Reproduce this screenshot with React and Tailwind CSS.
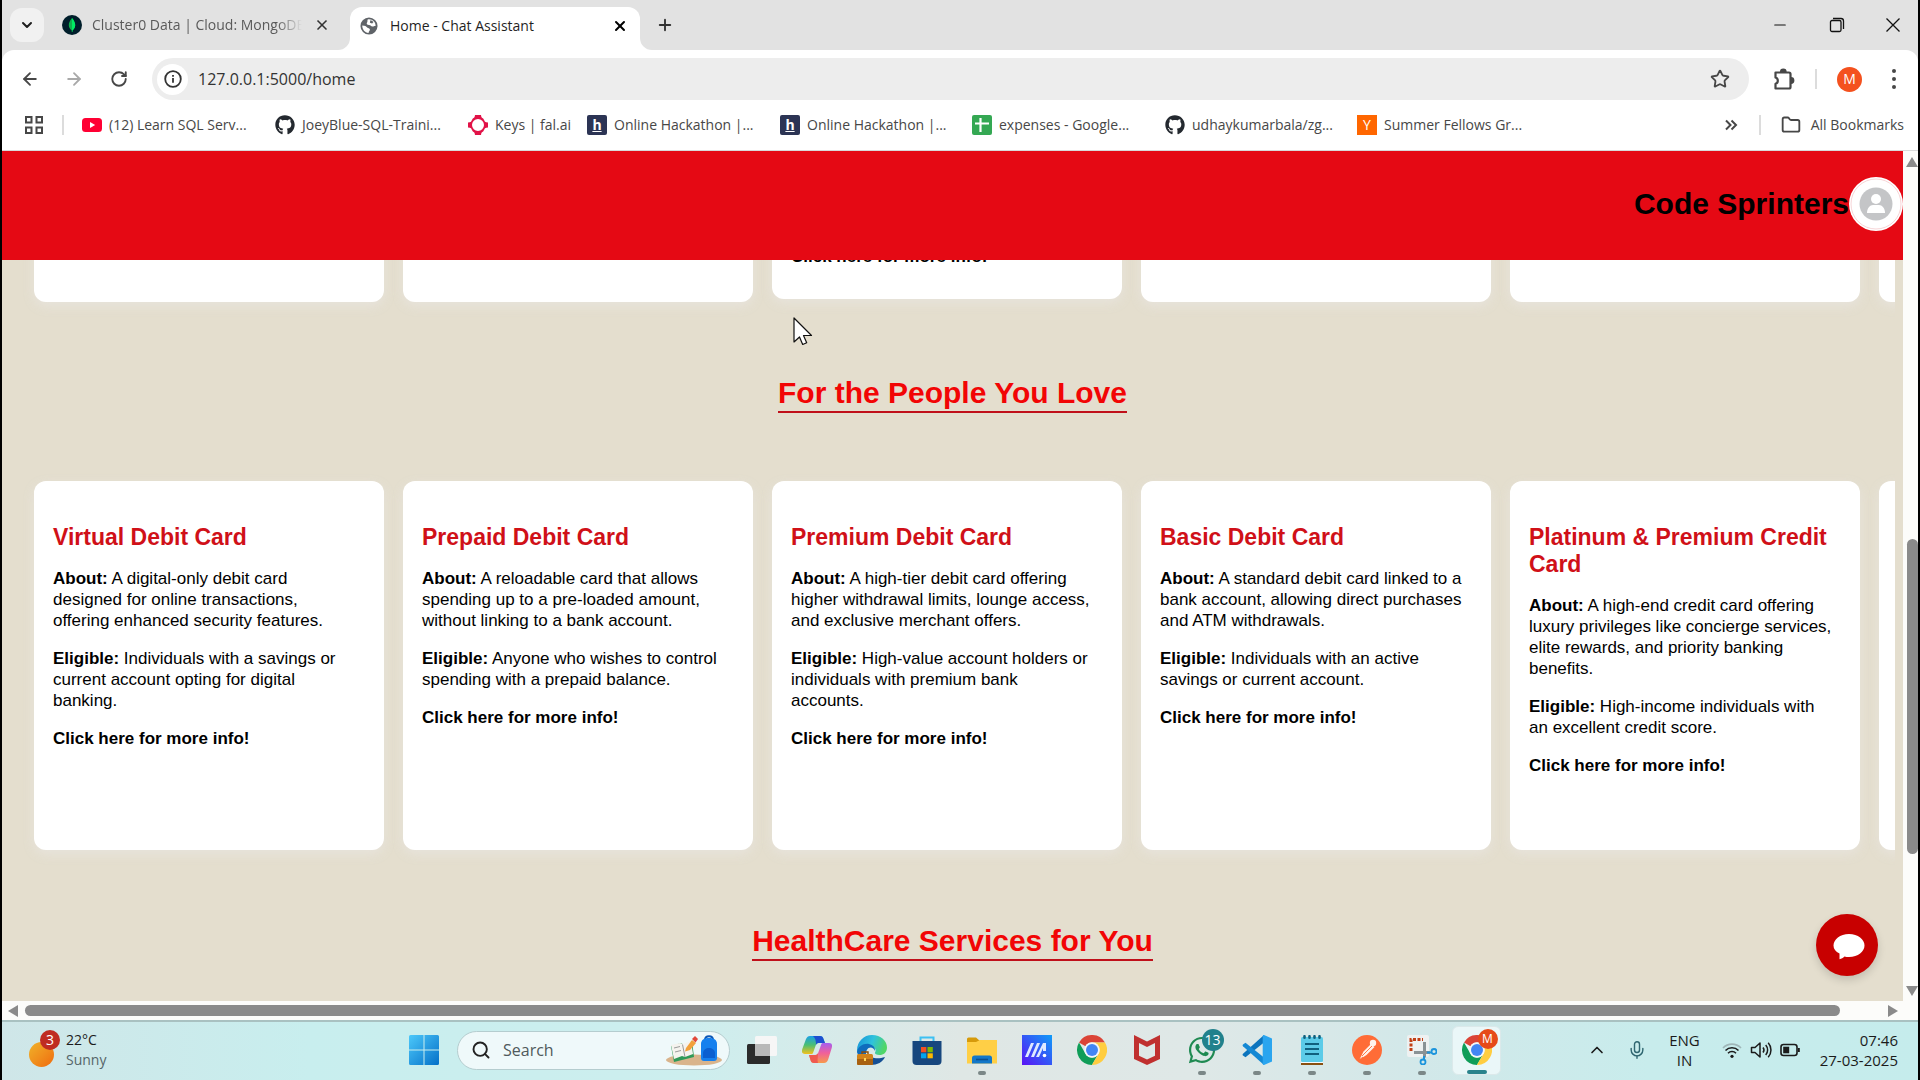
import { ChevronDown, X, Plus, ArrowLeft, ArrowRight, RotateCw, Star, Folder, Search, ChevronUp, Mic, Minus } from "lucide-react";
import { FaGithub, FaWhatsapp } from "react-icons/fa";

const ui = "font-['Open_Sans','Noto_Sans',sans-serif]";

const cards = [
  {
    title: "Virtual Debit Card",
    about: "A digital-only debit card designed for online transactions, offering enhanced security features.",
    eligible: "Individuals with a savings or current account opting for digital banking.",
  },
  {
    title: "Prepaid Debit Card",
    about: "A reloadable card that allows spending up to a pre-loaded amount, without linking to a bank account.",
    eligible: "Anyone who wishes to control spending with a prepaid balance.",
  },
  {
    title: "Premium Debit Card",
    about: "A high-tier debit card offering higher withdrawal limits, lounge access, and exclusive merchant offers.",
    eligible: "High-value account holders or individuals with premium bank accounts.",
  },
  {
    title: "Basic Debit Card",
    about: "A standard debit card linked to a bank account, allowing direct purchases and ATM withdrawals.",
    eligible: "Individuals with an active savings or current account.",
  },
  {
    title: "Platinum & Premium Credit Card",
    about: "A high-end credit card offering luxury privileges like concierge services, elite rewards, and priority banking benefits.",
    eligible: "High-income individuals with an excellent credit score.",
  },
];

function MongoIcon() {
  return (
    <svg viewBox="0 0 20 20" className="size-5 shrink-0">
      <circle cx="10" cy="10" r="10" fill="#001e2b" />
      <path d="M10 3C7.6 6 6.8 8 6.8 10.200c0 2.500 1.500 4 2.800 5l.2 1.800h.5l.2-1.800c1.300-1 2.700-2.500 2.700-5C13.200 8 12.400 6 10 3z" fill="#10b04e" />
      <path d="M10 3v14h.3l.2-1.800c1.300-1 2.700-2.500 2.700-5C13.200 8 12.400 6 10 3z" fill="#00ed64" />
    </svg>
  );
}

function GlobeIcon() {
  return (
    <svg viewBox="0 0 20 20" className="size-[18px] shrink-0">
      <circle cx="10" cy="10" r="9.500" fill="#5f6368" />
      <path d="M2.500 9.500c3 .2 4.500.8 5.500 2.200 1 1.300 2.800.6 3 2 .2 1.500-1.300 2-1.500 4C5.500 17.500 2.500 14 2.500 9.500z" fill="#fff" />
      <path d="M8.500 2.700c-.6 1.600.2 2.500-.8 3.800-.8 1 .3 2.300 2.300 2.400 2.200.1 2 1.800 4 1.700 1.500 0 2-1 3.300-.6C17.600 5.500 13.500 1.800 8.500 2.700z" fill="#fff" />
      <path d="M11.500 3.500c1.500.2 2.800 1 3.500 2l-1.500 1.700-2.500-.9z" fill="#5f6368" />
    </svg>
  );
}

function YoutubeIcon() {
  return (
    <svg viewBox="0 0 20 20" className="size-5 shrink-0">
      <rect y="3" width="20" height="14" rx="3.500" fill="#ff0033" />
      <path d="M8 7v6l5.200-3z" fill="#fff" />
    </svg>
  );
}

function FalIcon() {
  return (
    <svg viewBox="0 0 20 20" className="size-5 shrink-0">
      <path fillRule="evenodd" d="M7 0h6c.2 2.200 1 3 2.200 3.500L17 6.800c.6.500 1.600.7 3 .7v5c-1.400 0-2.400.2-3 .7l-1.800 3.300C14 17 13.200 17.800 13 20H7c-.2-2.200-1-3-2.200-3.500L3 13.200c-.6-.5-1.600-.7-3-.7v-5c1.400 0 2.400-.2 3-.7l1.800-3.300C6 3 6.800 2.200 7 0zm3 4a6 6 0 100 12 6 6 0 000-12z" fill="#e11247" />
    </svg>
  );
}

function HackIcon() {
  return (
    <span className="flex size-5 shrink-0 items-center justify-center rounded-xs bg-[#2c3454] text-sm leading-5 font-bold text-white">
      <u>h</u>
    </span>
  );
}

function SheetsIcon() {
  return (
    <svg viewBox="0 0 20 20" className="size-5 shrink-0">
      <rect width="20" height="20" rx="2" fill="#34a853" />
      <path d="M3 8.500h14M8.500 3v14" stroke="#fff" strokeWidth="2.200" />
    </svg>
  );
}

function YIcon() {
  return <span className="flex size-5 shrink-0 items-center justify-center bg-[#ff6600] text-sm leading-5 text-white">Y</span>;
}

const bookmarks = [
  { icon: <YoutubeIcon />, label: "(12) Learn SQL Serv...", w: "w-[166px]" },
  { icon: <FaGithub className="size-5 shrink-0 text-[#24292f]" />, label: "JoeyBlue-SQL-Traini...", w: "w-[166px]" },
  { icon: <FalIcon />, label: "Keys | fal.ai", w: "w-[92px]" },
  { icon: <HackIcon />, label: "Online Hackathon |...", w: "w-[166px]" },
  { icon: <HackIcon />, label: "Online Hackathon |...", w: "w-[165px]" },
  { icon: <SheetsIcon />, label: "expenses - Google...", w: "w-[166px]" },
  { icon: <FaGithub className="size-5 shrink-0 text-[#24292f]" />, label: "udhaykumarbala/zg...", w: "w-[165px]" },
  { icon: <YIcon />, label: "Summer Fellows Gr...", w: "w-[166px]" },
];

function TabStrip() {
  return (
    <div className="flex h-[50px] shrink-0 items-center bg-[#e2e2e2]">
      <button aria-label="Search tabs" className="ml-2 flex size-[34px] items-center justify-center rounded-xl bg-[#f1f1f1]">
        <ChevronDown className="size-4 text-[#1f1f1f]" strokeWidth={3} />
      </button>
      <div className="ml-[18px] flex w-[272px] items-center">
        <MongoIcon />
        <span className="ml-[10px] w-[210px] overflow-hidden text-sm whitespace-nowrap text-[#5a5a5a] [mask-image:linear-gradient(to_right,black_88%,transparent)]">
          Cluster0 Data | Cloud: MongoDB
        </span>
        <button aria-label="Close Cluster0 tab" className="ml-3">
          <X className="size-4 text-[#333]" strokeWidth={2.500} />
        </button>
      </div>
      <div className="relative ml-4 flex h-[43px] w-[290px] items-center self-end rounded-t-xl bg-white pb-[6px] pl-[10px]">
        <svg viewBox="0 0 12 12" className="absolute bottom-0 -left-3 size-3">
          <path d="M12 0v12H0A12 12 0 0012 0z" fill="#fff" />
        </svg>
        <svg viewBox="0 0 12 12" className="absolute -right-3 bottom-0 size-3">
          <path d="M0 0v12h12A12 12 0 010 0z" fill="#fff" />
        </svg>
        <GlobeIcon />
        <span className="ml-3 text-sm text-[#1f1f1f]">Home - Chat Assistant</span>
        <button aria-label="Close Home tab" className="mr-3 ml-auto">
          <X className="size-4 text-black" strokeWidth={3} />
        </button>
      </div>
      <button aria-label="New tab" className="ml-4">
        <Plus className="size-[18px] text-[#333]" strokeWidth={2.500} />
      </button>
      <div className="mr-[17px] ml-auto flex items-center gap-[40px] text-[#111]">
        <button aria-label="Minimize"><Minus className="size-[18px]" strokeWidth={1.500} /></button>
        <button aria-label="Restore">
          <svg viewBox="0 0 16 16" className="size-4" fill="none" stroke="currentColor" strokeWidth="1.300">
            <rect x="1.500" y="3.500" width="10.500" height="11" rx="1.500" />
            <path d="M4 1.500h8a2.500 2.500 0 012.500 2.500v8" />
          </svg>
        </button>
        <button aria-label="Close window">
          <svg viewBox="0 0 16 16" className="size-4" stroke="currentColor" strokeWidth="1.300"><path d="M1.500 1.500l13 13M14.500 1.500l-13 13" /></svg>
        </button>
      </div>
    </div>
  );
}

function Toolbar() {
  return (
    <div className="bg-[#e2e2e2]">
      <div className="flex h-[58px] items-center rounded-t-xl bg-white text-[#474747]">
        <button aria-label="Back" className="ml-[18px]"><ArrowLeft className="size-5" strokeWidth={2.200} /></button>
        <button aria-label="Forward" className="ml-6 text-[#a9a9a9]"><ArrowRight className="size-5" strokeWidth={2.200} /></button>
        <button aria-label="Reload" className="ml-[26px]"><RotateCw className="size-[18px]" strokeWidth={2.500} /></button>
        <div className="ml-6 flex h-[42px] flex-1 items-center rounded-full bg-[#ededed] px-[5px]">
          <button aria-label="Site information" className="flex size-[31px] items-center justify-center rounded-full bg-white">
            <svg viewBox="0 0 18 18" className="size-[18px]" fill="none" stroke="#333" strokeWidth="1.800">
              <circle cx="9" cy="9" r="7.800" />
              <path d="M9 8v4.800M9 5v1.800" />
            </svg>
          </button>
          <input aria-label="Address" defaultValue="127.0.0.1:5000/home" className="ml-[10px] min-w-0 flex-1 bg-transparent text-base text-[#333] outline-none" />
          <button aria-label="Bookmark this page" className="mr-[14px]"><Star className="size-5" strokeWidth={2.200} /></button>
        </div>
        <button aria-label="Extensions" className="ml-[24px]">
          <svg viewBox="0 0 22 22" className="size-[22px]" fill="none" stroke="currentColor" strokeWidth="2.200" strokeLinejoin="round">
            <path d="M2.500 4.500H16a1.500 1.500 0 011.500 1.500v13a1.500 1.500 0 01-1.500 1.500H2.500v-4.700a3.300 3.300 0 000-6.300z" />
            <path d="M8 4a2.300 2.300 0 014.600 0M18 10.200a2.300 2.300 0 010 4.600" fill="currentColor" />
          </svg>
        </button>
        <span className="ml-5 h-5 w-[2px] bg-[#dcdcdc]" />
        <button aria-label="Profile" className="ml-5 flex size-[25px] items-center justify-center rounded-full bg-[#f4511e] text-sm text-white">M</button>
        <button aria-label="Menu" className="mr-[22px] ml-[30px] flex flex-col gap-1">
          <span className="size-1 rounded-full bg-[#474747]" />
          <span className="size-1 rounded-full bg-[#474747]" />
          <span className="size-1 rounded-full bg-[#474747]" />
        </button>
      </div>
    </div>
  );
}

function BookmarksBar() {
  return (
    <nav aria-label="Bookmarks" className="flex h-[43px] shrink-0 items-center border-b border-[#d9d9d9] bg-white pb-2 text-sm text-[#474747]">
      <button aria-label="Apps" className="ml-[23px]">
        <svg viewBox="0 0 18 18" className="size-[18px]" fill="none" stroke="#474747" strokeWidth="2">
          <path d="M1 1h5.500v5.500H1zM11.500 1H17v5.500h-5.500zM1 11.500h5.500V17H1zM11.500 11.500H17V17h-5.500z" />
        </svg>
      </button>
      <span className="ml-[19px] h-5 w-[2px] bg-[#dcdcdc]" />
      <div className="ml-[18px] flex min-w-0 flex-1 gap-[27px] overflow-hidden">
        {bookmarks.map((b, i) => (
          <a key={i} href="#" className={`${b.w} flex shrink-0 items-center gap-[7px] whitespace-nowrap`}>
            {b.icon}
            <span>{b.label}</span>
          </a>
        ))}
      </div>
      <button aria-label="More bookmarks">
        <svg viewBox="0 0 14 14" className="size-[14px]" fill="none" stroke="#474747" strokeWidth="2"><path d="M2 2.500L6.500 7 2 11.500M7.500 2.500L12 7l-4.500 4.500" /></svg>
      </button>
      <span className="ml-[21px] h-5 w-[2px] bg-[#dcdcdc]" />
      <button className="mr-[14px] ml-5 flex items-center gap-[10px] whitespace-nowrap">
        <Folder className="size-5" strokeWidth={2.200} />
        All Bookmarks
      </button>
    </nav>
  );
}

function SectionTitle({ children }) {
  return (
    <h2 className="flex justify-center">
      <span className="border-b-2 border-[#c0101a] pb-px text-[30px] leading-[34px] font-bold text-[#f20505]">{children}</span>
    </h2>
  );
}

const cardBox = "w-[350px] shrink-0 rounded-xl bg-white shadow-[0_4px_12px_rgba(232,228,222,0.9)]";

function Page() {
  return (
    <main className="flex min-w-0 flex-1 flex-col overflow-hidden bg-[#e4dece] font-['Liberation_Sans',Arial,sans-serif] text-[17px] leading-[21px] text-black">
      <header className="flex h-[109px] shrink-0 items-center justify-end bg-[#e50914] pb-1">
        <span className="text-[30px] leading-9 font-bold">Code Sprinters</span>
        <button aria-label="Account" className="flex size-[54px] items-center justify-center rounded-full bg-white">
          <svg viewBox="0 0 54 54" className="size-full">
            <circle cx="27" cy="27" r="25" fill="none" stroke="#f0b9bc" strokeWidth="0.600" />
            <circle cx="27" cy="27" r="16.500" fill="#c4c5c7" />
            <circle cx="27" cy="22" r="5" fill="#fff" />
            <path d="M18 36c0-5 3-8 6-8h6c3 0 6 3 6 8z" fill="#fff" />
          </svg>
        </button>
      </header>

      <div className="mr-2 flex h-[62px] shrink-0 items-end gap-[19px] overflow-hidden pb-5 pl-8">
        <div className={`${cardBox} h-[369px]`} />
        <div className={`${cardBox} h-[369px]`} />
        <div className={`${cardBox} mb-[3px] flex h-[369px] flex-col justify-end px-[19px] pb-8`}>
          <a href="#" className="font-bold">Click here for more info!</a>
        </div>
        <div className={`${cardBox} h-[369px]`} />
        <div className={`${cardBox} h-[369px]`} />
        <div className={`${cardBox} h-[369px]`} />
      </div>

      <section className="mt-[54px] shrink-0">
        <SectionTitle>For the People You Love</SectionTitle>
        <div className="mt-12 mr-2 flex gap-[19px] overflow-hidden pt-5 pb-5 pl-8">
          {cards.map((c) => (
            <article key={c.title} className={`${cardBox} flex h-[369px] flex-col gap-[17px] py-[43px] pr-[27px] pl-[19px]`}>
              <h3 className="-mr-5 text-[23px] leading-[27px] font-bold text-[#d01018]">{c.title}</h3>
              <p><b>About:</b> {c.about}</p>
              <p><b>Eligible:</b> {c.eligible}</p>
              <a href="#" className="font-bold">Click here for more info!</a>
            </article>
          ))}
          <article className={cardBox} />
        </div>
      </section>

      <section className="mt-[54px] shrink-0">
        <SectionTitle>HealthCare Services for You</SectionTitle>
      </section>
    </main>
  );
}

function VerticalScrollbar() {
  return (
    <div className="flex w-[15px] shrink-0 flex-col items-end bg-[#fcfcfa]">
      <svg viewBox="0 0 12 10" className="mt-[6px] h-[10px] w-3"><path d="M0 10L6 0l6 10z" fill="#8a8a8a" /></svg>
      <div className="flex w-full flex-1 flex-col items-end">
        <div className="flex-[372]" />
        <div className="w-[11px] flex-[315] rounded-full bg-[#8a8a8a]" />
        <div className="flex-[132]" />
      </div>
      <svg viewBox="0 0 12 10" className="mb-[5px] h-[10px] w-3"><path d="M0 0h12L6 10z" fill="#8a8a8a" /></svg>
    </div>
  );
}

function HorizontalScrollbar() {
  return (
    <div className="flex h-[19px] shrink-0 items-center bg-[#fcfcfa] pl-[6px]">
      <svg viewBox="0 0 10 12" className="h-3 w-[10px]"><path d="M10 0v12L0 6z" fill="#8a8a8a" /></svg>
      <div className="ml-[7px] h-[11px] flex-[1815] rounded-full bg-[#8a8a8a]" />
      <div className="flex-[48]" />
      <svg viewBox="0 0 10 12" className="mr-5 h-3 w-[10px]"><path d="M0 0v12l10-6z" fill="#8a8a8a" /></svg>
    </div>
  );
}

function ChromeIcon() {
  return (
    <svg viewBox="0 0 30 30" className="size-full">
      <path d="M2 7.500A15 15 0 0128 7.500H15a7.500 7.500 0 00-6.500 3.700z" fill="#db4437" />
      <path d="M2 7.500A15 15 0 0014.900 30l6.600-11.200A7.500 7.500 0 018.500 18.800z" fill="#0f9d58" />
      <path d="M28 7.500A15 15 0 0114.900 30l6.600-11.200A7.500 7.500 0 0015 7.500z" fill="#ffcd40" />
      <circle cx="15" cy="15" r="7.700" fill="#f4f7f7" />
      <circle cx="15" cy="15" r="6" fill="#4285f4" />
    </svg>
  );
}

const apps = [
  {
    name: "Task view",
    art: (
      <svg viewBox="0 0 30 30" className="size-full">
        <rect y="9" width="23" height="20" rx="1.500" fill="#2b2b2b" />
        <rect x="8" y="1" width="22" height="20" rx="1.500" fill="#f6f6f6" />
        <path d="M8 9h15v12H9.500A1.500 1.500 0 018 19.500z" fill="#b9b9b9" />
      </svg>
    ),
  },
  {
    name: "Copilot",
    art: (
      <svg viewBox="0 0 30 30" className="size-full">
        <defs>
          <linearGradient id="cpA" x1="0" y1="0" x2="0" y2="1"><stop offset="0" stopColor="#1aa0e8" /><stop offset=".5" stopColor="#4bbf72" /><stop offset="1" stopColor="#f3c11d" /></linearGradient>
          <linearGradient id="cpB" x1="0" y1="0" x2="0" y2="1"><stop offset="0" stopColor="#a55df0" /><stop offset=".5" stopColor="#f0609a" /><stop offset="1" stopColor="#f79a4b" /></linearGradient>
        </defs>
        <path d="M8 1h10c2 0 3 1 3.500 3L23 8h-6c-2 0-3 1-3.500 3L11 18c-.5 1-1 1-2 1H3c-3 0-3.500-2-2.700-5L4 4c1-2 2-3 4-3z" fill="url(#cpA)" />
        <path d="M14 1h4c2 0 3 1 3.500 3L23 8h-6c-1.500 0-2.500.5-3 2 0-4-.5-7-3-9z" fill="#1d4fd0" />
        <path d="M22 28H12c-2 0-3-1-3.500-3L7 20h6c2 0 3-1 3.500-3L19 10c.5-1.500 1-2 2-2h6c3 0 3.500 2 2.700 5L26 25c-1 2-2 3-4 3z" fill="url(#cpB)" />
        <path d="M16 28h-4c-2 0-3-1-3.500-3L7 20h6c1.500 0 2.500-.5 3-2 0 4-1 7 0 10z" fill="#ef5a50" />
      </svg>
    ),
  },
  {
    name: "Edge",
    art: (
      <svg viewBox="0 0 30 30" className="size-full">
        <defs><linearGradient id="edA" x1="0" y1="0" x2="1" y2=".3"><stop offset="0" stopColor="#1591d8" /><stop offset=".55" stopColor="#2fc2dd" /><stop offset="1" stopColor="#50d667" /></linearGradient></defs>
        <path d="M0 15A15 15 0 0115 0c9 0 15 6 15 12.500 0 5-3.500 7.500-7.500 7.500-3 0-5-1-4.500-2.500 1.500-2 .5-5.500-3.500-5.500C8 12 5 17 5 22 2 20 0 18 0 15z" fill="url(#edA)" />
        <path d="M0 17C1 11 7 8 12 9c4 .8 6.500 3.500 6 7-1-3-4-4.500-6.500-3-3 2-2.500 7-2.500 7H1z" fill="#0f6cbd" />
        <path d="M14 22c5 2 9 1.500 14 0-2 5-8 8-14 8z" fill="#144f94" />
        <rect y="19" width="16" height="11" rx="1.500" fill="#d0831a" />
        <path d="M0 24h16v4.500a1.500 1.500 0 01-1.500 1.500h-13A1.500 1.500 0 010 28.500z" fill="#a86110" />
        <path d="M5 19v-2h6v2" stroke="#8a4b08" strokeWidth="1.400" fill="none" />
        <rect x="7" y="23" width="2" height="3" fill="#ffd65a" />
      </svg>
    ),
  },
  {
    name: "Microsoft Store",
    art: (
      <svg viewBox="0 0 30 30" className="size-full">
        <path d="M8.500 7V2.500h13V7" fill="none" stroke="#3cc0f2" strokeWidth="2" />
        <path d="M.5 6h29v20a4 4 0 01-4 4h-21a4 4 0 01-4-4z" fill="#17477e" />
        <path d="M9 12h5.300v5.300H9z" fill="#f25022" /><path d="M15.500 12h5.300v5.300h-5.300z" fill="#7fba00" />
        <path d="M9 18.300h5.300v5H9z" fill="#00a4ef" /><path d="M15.500 18.300h5.300v5h-5.300z" fill="#ffb900" />
      </svg>
    ),
  },
  {
    name: "File Explorer",
    dot: true,
    art: (
      <svg viewBox="0 0 30 30" className="size-full">
        <path d="M0 4a1.500 1.500 0 011.500-1.500H9l4 3.500-4 4H0z" fill="#d69a0b" />
        <path d="M0 7h9l4-2h17v23.500H0z" fill="#ffcf46" />
        <path d="M5 28.500V23a2.500 2.500 0 012.500-2.500h15A2.500 2.500 0 0125 23v5.500z" fill="#1377c8" />
        <path d="M9 24.500h12" stroke="#0b4f8f" strokeWidth="1.600" />
      </svg>
    ),
  },
  {
    name: "MyASUS",
    art: (
      <svg viewBox="0 0 30 30" className="size-full">
        <defs><linearGradient id="asA" x1="0" y1="1" x2="1" y2="0"><stop offset="0" stopColor="#5a12f5" /><stop offset="1" stopColor="#0f9cf8" /></linearGradient></defs>
        <rect width="30" height="30" fill="url(#asA)" />
        <path d="M3 22L9 8h3L6 22zM9 22l6-14h3l-6 14zM14 22L21 8h3v8h-3v-3l-4 9z" fill="#dfe9ff" />
        <circle cx="22.500" cy="20.500" r="1.800" fill="#fff" />
      </svg>
    ),
  },
  { name: "Chrome", art: <ChromeIcon /> },
  {
    name: "McAfee",
    art: (
      <svg viewBox="0 0 30 30" className="size-full">
        <path fillRule="evenodd" d="M2 0l13 6.500L28 0v24l-13 6-13-6zM7 8v12.700l8 3.800 8-3.800V8l-8 4z" fill="#c0302f" />
      </svg>
    ),
  },
  {
    name: "WhatsApp",
    dot: true,
    art: (
      <>
        <FaWhatsapp className="size-full text-[#1f8a52]" />
        <span className="absolute -top-[6px] left-[15px] flex size-[22px] items-center justify-center rounded-full bg-[#21818c] text-sm text-white">13</span>
      </>
    ),
  },
  {
    name: "Visual Studio Code",
    dot: true,
    art: (
      <svg viewBox="0 0 30 30" className="size-full">
        <path d="M22 7.500L3.500 22.300 1 20.500c-.6-.5-.6-1.200 0-1.800L22 0z" fill="#0c74bd" />
        <path d="M22 22.500L3.500 7.700 1 9.500c-.6.500-.6 1.200 0 1.800L22 30z" fill="#1488d4" />
        <path d="M22 0l8 3.500v23L22 30c-.8 0-1.300-.5-1.300-1.200V1.200C20.700.5 21.200 0 22 0z" fill="#2aa5ef" />
      </svg>
    ),
  },
  {
    name: "Notepad",
    dot: true,
    art: (
      <svg viewBox="0 0 30 30" className="size-full">
        <rect x="4" y="27" width="22" height="3" fill="#8a5010" />
        <rect x="4" y="2" width="22" height="25" rx="1.500" fill="#5ccbe8" />
        <path d="M4 27h22v1H4z" fill="#f2fbff" />
        <path d="M8 9h14M8 14h14M8 19h14" stroke="#10607e" strokeWidth="1.800" />
        <path d="M7.500 1.200v1.600M12.500 1.200v1.600M17.500 1.200v1.600M22.500 1.200v1.600" stroke="#10607e" strokeWidth="2.600" strokeLinecap="round" />
      </svg>
    ),
  },
  {
    name: "Postman",
    dot: true,
    art: (
      <svg viewBox="0 0 30 30" className="size-full">
        <circle cx="15" cy="15" r="15" fill="#ff6c37" />
        <circle cx="21" cy="8" r="3.200" fill="#fff3ec" />
        <path d="M19 9l3.500 3-8 8-7 4.500 4-8z" fill="#fff3ec" />
        <path d="M10 21L20 11M7 25l4-3" stroke="#ff6c37" strokeWidth="0.900" />
      </svg>
    ),
  },
  {
    name: "Snipping Tool",
    dot: true,
    art: (
      <svg viewBox="0 0 30 30" className="size-full">
        <rect width="22" height="22" rx="2" fill="#eef1f1" />
        <path d="M4 16V4.500h12" fill="none" stroke="#c23f14" strokeWidth="3" strokeDasharray="3 1.500" />
        <path d="M17.500 7v15.500M7 17.500h16" stroke="#8a9295" strokeWidth="3" />
        <circle cx="27" cy="16.500" r="2.500" fill="none" stroke="#1c94dc" strokeWidth="1.800" />
        <circle cx="16" cy="27" r="2.500" fill="none" stroke="#1c94dc" strokeWidth="1.800" />
        <path d="M20 17.500h4.500M17 21v4" stroke="#1c94dc" strokeWidth="2" />
      </svg>
    ),
  },
  {
    name: "Chrome, Home - Chat Assistant",
    active: true,
    art: (
      <>
        <ChromeIcon />
        <span className="absolute -top-[6px] left-4 flex size-5 items-center justify-center rounded-full bg-[#e64a19] text-xs text-white">M</span>
      </>
    ),
  },
];

function Taskbar() {
  return (
    <footer className="flex h-[60px] shrink-0 items-center border-t-2 border-[#a9c1c1] bg-[linear-gradient(90deg,#cfe6e8,#c8eeee_16%,#cdeeee_36%,#dfe7e5_50%,#dfe8e7_62%,#d2e8e9_74%,#c8ecec_86%,#c5ecec)] pb-[2px] text-[#1b1b1b]">
      <div className="flex flex-1 items-center">
        <button aria-label="Weather" className="ml-[27px] flex items-center gap-2 text-left">
          <span className="relative mt-1 size-[29px]">
            <span className="absolute bottom-0 left-0 size-[25px] rounded-full bg-linear-to-br from-[#efb229] to-[#ee6a0e]" />
            <span className="absolute -top-2 left-[11px] flex size-5 items-center justify-center rounded-full bg-[#bf2c22] text-sm text-white">3</span>
          </span>
          <span className="flex flex-col text-sm leading-5">
            <span>22°C</span>
            <span className="text-[#556568]">Sunny</span>
          </span>
        </button>
      </div>
      <div className="flex items-center pl-[10px]">
        <button aria-label="Start">
          <svg viewBox="0 0 30 30" className="size-[30px]">
            <defs><linearGradient id="win" x1="0" y1="0" x2="1" y2="1"><stop offset="0" stopColor="#4cc8fa" /><stop offset="1" stopColor="#0470c8" /></linearGradient></defs>
            <path d="M0 1.500Q0 0 1.500 0h13v14.500H0zM15.500 0h13Q30 0 30 1.500v13H15.500zM0 15.500h14.500V30h-13Q0 30 0 28.500zM15.500 15.500H30v13q0 1.500-1.500 1.500h-13z" fill="url(#win)" />
          </svg>
        </button>
        <label className="ml-[18px] flex h-[39px] w-[273px] items-center rounded-full border border-[#b5cdcf] bg-[#eff9fa] pr-[6px] pl-[13px]">
          <Search className="size-5 shrink-0 text-[#222]" strokeWidth={2.300} />
          <input aria-label="Search" placeholder="Search" className="ml-3 w-full min-w-0 bg-transparent text-base outline-none placeholder:text-[#505a5c]" />
          <svg viewBox="0 0 58 32" className="h-8 w-[58px] shrink-0">
            <ellipse cx="29" cy="26" rx="28" ry="5.500" fill="#d9b48c" />
            <path d="M6 12l10-3 3 2 8-4 2 16-20 5z" fill="#2f9a58" />
            <path d="M6 11l9-2 3 1 8-3 2 13-8 3-3-1-8 3z" fill="#f5f3ee" />
            <path d="M17.500 10.500l2.500 12.500M9 14l6-1.500M10 18l6-1.500" stroke="#9b9b9b" strokeWidth="1" />
            <path d="M21 14l6-8 4 3-6 7-5 1.500z" fill="#f2a13b" /><path d="M27 5l3-3 3 3-2.500 3.500z" fill="#e2483b" />
            <path d="M40 6c0-5 8-5 8 0" fill="none" stroke="#0d57b5" strokeWidth="2" />
            <path d="M36 10c0-4 3-6 8-6s8 2 8 6v14c0 2-1 3-3 3H39c-2 0-3-1-3-3z" fill="#1580ee" />
            <path d="M38 19c0-3 3-5 6-5s6 2 6 5v5H38z" fill="#0b5fd0" />
          </svg>
        </label>
        <div className="ml-1 flex items-center">
          {apps.map((a) => (
            <button
              key={a.name}
              aria-label={a.name}
              className={a.active ? "relative ml-[3px] flex size-[49px] items-center justify-center rounded-md border border-[#dbe9ea] bg-[#eaf7f8]" : "relative flex h-[49px] w-[55px] items-center justify-center"}
            >
              <span className="relative size-[30px]">{a.art}</span>
              {a.dot && <span className="absolute bottom-0 h-1 w-2 rounded-full bg-[#7b8787]" />}
              {a.active && <span className="absolute bottom-0 h-1 w-5 rounded-full bg-[#2a838c]" />}
            </button>
          ))}
        </div>
      </div>
      <div className="flex flex-1 items-center justify-end pr-5 text-[15px] leading-5">
        <button aria-label="Show hidden icons"><ChevronUp className="size-5" /></button>
        <button aria-label="Microphone" className="ml-5"><Mic className="size-5 text-[#2f6670]" strokeWidth={1.700} /></button>
        <button className="ml-[22px] text-center">ENG<br />IN</button>
        <button aria-label="Network, sound and battery" className="ml-[22px] flex items-center gap-2">
          <svg viewBox="0 0 20 20" className="size-5" fill="none" stroke="#1b1b1b" strokeWidth="1.600">
            <path d="M1 8a12.500 12.500 0 0118 0" stroke="#9fb6b8" />
            <path d="M3.500 10.500a9.200 9.200 0 0113 0M6 13.200a5.700 5.700 0 018 0" />
            <circle cx="10" cy="16.300" r="1.600" fill="#1b1b1b" stroke="none" />
          </svg>
          <svg viewBox="0 0 22 20" className="h-5 w-[22px]" fill="none" stroke="#1b1b1b" strokeWidth="1.500" strokeLinejoin="round">
            <path d="M1.500 7.500h3.500l5-4.500v14l-5-4.500H1.500zM13 7.500a4 4 0 010 5M15.700 5a7.500 7.500 0 010 10M18.200 2.700a11 11 0 010 14.600" />
          </svg>
          <svg viewBox="0 0 20 20" className="size-5" fill="none" stroke="#1b1b1b" strokeWidth="1.600">
            <rect x="1" y="4.500" width="16" height="11" rx="2.500" />
            <rect x="3.200" y="6.700" width="6" height="6.600" fill="#1b1b1b" stroke="none" />
            <path d="M18.800 8v4" strokeWidth="2" />
          </svg>
        </button>
        <button className="ml-5 text-right">07:46<br />27-03-2025</button>
      </div>
    </footer>
  );
}

export default function App() {
  return (
    <div className={`${ui} relative flex h-screen flex-col overflow-hidden border-x-2 border-black bg-white`}>
      <TabStrip />
      <Toolbar />
      <BookmarksBar />
      <div className="relative flex min-h-0 flex-1">
        <Page />
        <VerticalScrollbar />
        <button aria-label="Open chat" className="absolute right-10 bottom-[25px] flex size-[62px] items-center justify-center rounded-full bg-[#c80000] shadow-[0_4px_8px_rgba(0,0,0,0.15)]">
          <svg viewBox="0 0 32 26" className="mt-1 ml-[3px] h-[26px] w-8">
            <path d="M16 0c9 0 15.500 5.500 15.500 11.500S25 23 16 23c-2 0-3-.2-4.500-.6-1.500 1.400-3 2.200-5 2.900V19.500C2.500 17.500.5 15 .5 11.500.5 5.500 7 0 16 0z" fill="#fff" />
          </svg>
        </button>
      </div>
      <HorizontalScrollbar />
      <Taskbar />
      <svg viewBox="0 0 20 30" className="pointer-events-none absolute top-[317px] left-[791px] h-[30px] w-5">
        <path d="M1 1v24l5.500-5 3.200 7.500 4-1.700L10.500 18.500h8z" fill="#fff" stroke="#111" strokeWidth="1.200" strokeLinejoin="round" />
      </svg>
    </div>
  );
}
